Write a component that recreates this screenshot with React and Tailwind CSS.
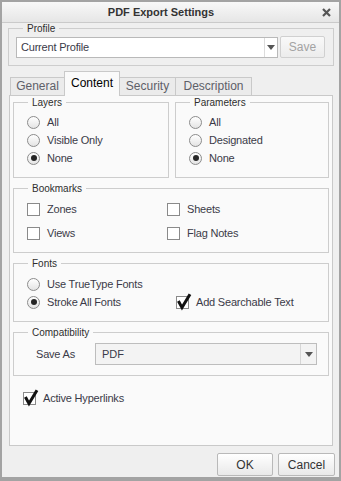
import React from 'react';

function Legend({ children, bg = 'bg-[#fafafa]' }) {
  return (
    <span className={`absolute -top-[6px] left-[14px] px-[4px] text-[10px] leading-[12px] text-[#2e2e2e] ${bg}`}>
      {children}
    </span>
  );
}

function Group({ title, className = '', children }) {
  return (
    <div className={`relative border border-[#cdcdcd] ${className}`}>
      <Legend>{title}</Legend>
      {children}
    </div>
  );
}

function Radio({ label, checked }) {
  return (
    <div className="flex h-[18px] items-center">
      <span className="flex h-[13px] w-[13px] items-center justify-center rounded-full border border-[#8c8c8c] bg-linear-to-b from-white to-[#e4e4e4]">
        {checked && <span className="h-[6px] w-[6px] rounded-full bg-[#262626]" />}
      </span>
      <span className="ml-[7px] text-[11px] tracking-[-0.2px] text-[#3a3a48]">{label}</span>
    </div>
  );
}

function Check() {
  return (
    <svg className="absolute -left-px -top-[5px]" width="16" height="19" viewBox="0 0 16 19">
      <polyline points="2.4,9 6,15.6 14,2.2" fill="none" stroke="#111" strokeWidth="3" />
    </svg>
  );
}

function Checkbox({ label, checked, h = 'h-[24px]' }) {
  return (
    <div className={`flex items-center ${h}`}>
      <span className="relative h-[13px] w-[13px] border border-[#8a8a8a] bg-white">
        {checked && <Check />}
      </span>
      <span className="ml-[7px] text-[11px] tracking-[-0.2px] text-[#3a3a48]">{label}</span>
    </div>
  );
}

function Arrow() {
  return <span className="h-0 w-0 border-x-[4px] border-t-[5px] border-x-transparent border-t-[#555]" />;
}

function Tab({ label, active, first }) {
  if (active) {
    return (
      <div className="relative z-10 -mb-px -ml-px flex h-[25px] w-[56px] items-center justify-center border border-b-0 border-[#c9c9c9] bg-[#fafafa] pb-[2px] text-[12px] text-black">
        {label}
      </div>
    );
  }
  return (
    <div
      className={`flex h-[18px] items-center justify-center border border-b-0 border-[#c9c9c9] bg-[#ebebeb] pb-[2px] text-[12px] text-[#5e6068] ${
        first ? 'w-[55px]' : '-ml-px'
      }`}
    >
      {label}
    </div>
  );
}

export default function App() {
  return (
    <div className="flex h-[481px] w-[341px] flex-col border-2 border-b-[4px] border-[#a3a3a3] bg-[#efefef] font-['Liberation_Sans',Arial,sans-serif]">
      {/* title bar */}
      <div className="flex h-[21px] shrink-0 items-center border-b border-[#cacaca] bg-linear-to-b from-[#f8f8f8] to-[#e6e6e6]">
        <div className="flex-1 text-center text-[11px] font-bold text-[#333]">PDF Export Settings</div>
        <div className="mr-[6px] flex h-[13px] w-[13px] items-center justify-center">
          <svg width="9" height="9" viewBox="0 0 9 9">
            <path d="M1 1L8 8M8 1L1 8" stroke="#555" strokeWidth="2.2" />
          </svg>
        </div>
      </div>

      {/* profile */}
      <div className="relative ml-[6px] mr-[5px] mt-[5px] flex h-[38px] items-center gap-[2px] border border-[#cdcdcd] pl-[7px] pr-[8px]">
        <Legend bg="bg-[#efefef]">Profile</Legend>
        <div className="flex h-[21px] flex-1 items-center border border-[#b9b9b9] bg-white">
          <span className="flex-1 pl-[4px] text-[11px] tracking-[-0.2px] text-[#3a3a48]">Current Profile</span>
          <span className="flex h-full w-[13px] items-center justify-center border-l border-[#dcdcdc]">
            <Arrow />
          </span>
        </div>
        <button className="h-[22px] w-[45px] rounded-[2px] border border-[#d0d0d0] bg-linear-to-b from-[#f9f9f9] to-[#ececec] text-[12px] text-[#a3a3a3]">
          Save
        </button>
      </div>

      {/* tabs */}
      <div className="ml-[8px] mt-[5px] flex h-[24px] items-end">
        <Tab label="General" first />
        <Tab label="Content" active />
        <div className="-ml-px w-[58px]">
          <Tab label="Security" />
        </div>
        <div className="-ml-px w-[76px]">
          <Tab label="Description" />
        </div>
      </div>

      {/* panel */}
      <div className="ml-[7px] mr-[6px] h-[351px] shrink-0 border border-[#c9c9c9] bg-[#fafafa] px-[3px] pt-[6px]">
        <div className="flex gap-[6px]">
          <Group title="Layers" className="w-[156px] pb-[10px] pl-[13px] pt-[10px]">
            <Radio label="All" />
            <Radio label="Visible Only" />
            <Radio label="None" checked />
          </Group>
          <Group title="Parameters" className="flex-1 pb-[10px] pl-[13px] pt-[10px]">
            <Radio label="All" />
            <Radio label="Designated" />
            <Radio label="None" checked />
          </Group>
        </div>

        <Group title="Bookmarks" className="mt-[10px] grid grid-cols-[140px_1fr] pb-[7px] pl-[13px] pt-[8px]">
          <Checkbox label="Zones" />
          <Checkbox label="Sheets" />
          <Checkbox label="Views" />
          <Checkbox label="Flag Notes" />
        </Group>

        <Group title="Fonts" className="mt-[10px] grid grid-cols-[149px_1fr] pb-[10px] pl-[13px] pt-[11px]">
          <Radio label="Use TrueType Fonts" />
          <div />
          <Radio label="Stroke All Fonts" checked />
          <Checkbox label="Add Searchable Text" checked h="h-[18px]" />
        </Group>

        <Group title="Compatibility" className="mt-[10px] flex items-center pb-[10px] pl-[22px] pr-[11px] pt-[10px]">
          <span className="w-[59px] text-[11px] tracking-[-0.2px] text-[#3a3a48]">Save As</span>
          <div className="flex h-[22px] flex-1 items-center border border-[#bdbdbd] bg-[#f3f3f3]">
            <span className="flex-1 pl-[6px] text-[11px] text-[#3a3a48]">PDF</span>
            <span className="flex h-full w-[16px] items-center justify-center border-l border-[#d6d6d6]">
              <Arrow />
            </span>
          </div>
        </Group>

        <div className="mt-[13px] pl-[10px]">
          <Checkbox label="Active Hyperlinks" checked h="h-[18px]" />
        </div>
      </div>

      {/* buttons */}
      <div className="mt-[7px] flex justify-end gap-[5px] pr-[4px]">
        <button className="h-[23px] w-[56px] rounded-[2px] border border-[#b9b9b9] bg-linear-to-b from-white to-[#e9e9e9] text-[12px] text-[#333]">
          OK
        </button>
        <button className="h-[23px] w-[57px] rounded-[2px] border border-[#b9b9b9] bg-linear-to-b from-white to-[#e9e9e9] text-[12px] text-[#333]">
          Cancel
        </button>
      </div>
    </div>
  );
}
